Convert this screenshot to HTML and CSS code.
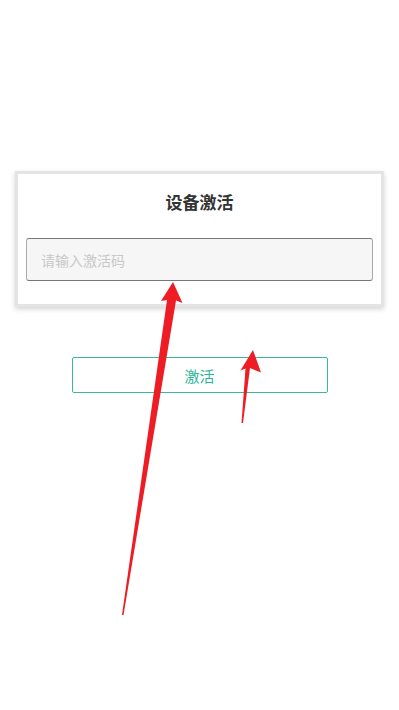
FILE: index.html
```html
<!DOCTYPE html>
<html lang="zh-CN">
<head>
    <meta charset="UTF-8">
    <meta name="viewport" content="width=device-width, initial-scale=1.0">
    <title>设备激活</title>
    <link rel="stylesheet" href="styles.css">
</head>
<body>
    <div class="page">
        <div class="card">
            <h1 class="title">设备激活</h1>
            <input class="code-input" type="text" placeholder="请输入激活码">
        </div>
        <button class="activate-btn">激活</button>
    </div>
    <!-- 标注箭头 -->
    <svg class="marks" width="399" height="710" viewBox="0 0 399 710">
        <polygon fill="#ee1c25" points="173,282 182.5,303 176,300.5 123.5,615 122,615 167,300 161,301"/>
        <polygon fill="#ee1c25" points="253,350 261,372.5 250,368 243,423 241.5,423 245.5,368.5 240.5,370.5"/>
    </svg>
</body>
</html>
```

FILE: styles.css
```css
html, body {
    height: 100%;
}
body {
    margin: 0;
    min-height: 710px;
    font-family: "Noto Sans CJK SC", "Noto Sans", sans-serif;
    background-color: #ffffff;
    position: relative;
    overflow: hidden;
}
.page {
    padding-top: 171px;
    display: flex;
    flex-direction: column;
    align-items: center;
}
.card {
    box-sizing: border-box;
    width: 369px;
    border: 3px solid #e4e4e4;
    box-shadow: 0 2px 5px rgba(0, 0, 0, 0.18);
    background-color: white;
    padding: 16px 8px 23px;
    display: flex;
    flex-direction: column;
}
.title {
    margin: 0 0 24px;
    font-size: 17px;
    line-height: 24px;
    font-weight: bold;
    color: #333;
    text-align: center;
}
.code-input {
    box-sizing: border-box;
    height: 43px;
    width: 100%;
    border: 1px solid #777;
    border-left-color: #aaa;
    border-right-color: #aaa;
    border-radius: 3px;
    background-color: #f6f6f6;
    padding: 0 14px;
    font-family: inherit;
    font-size: 14px;
    color: #333;
    outline: none;
}
.code-input::placeholder {
    color: #c8c8c8;
}
.activate-btn {
    box-sizing: border-box;
    margin-top: 50px;
    width: 256px;
    height: 36px;
    border: 1px solid #38b99a;
    border-radius: 2px;
    background-color: white;
    color: #2ab597;
    font-family: inherit;
    font-size: 15px;
    padding: 0;
}
.marks {
    position: absolute;
    left: 0;
    top: 0;
    pointer-events: none;
}
```
